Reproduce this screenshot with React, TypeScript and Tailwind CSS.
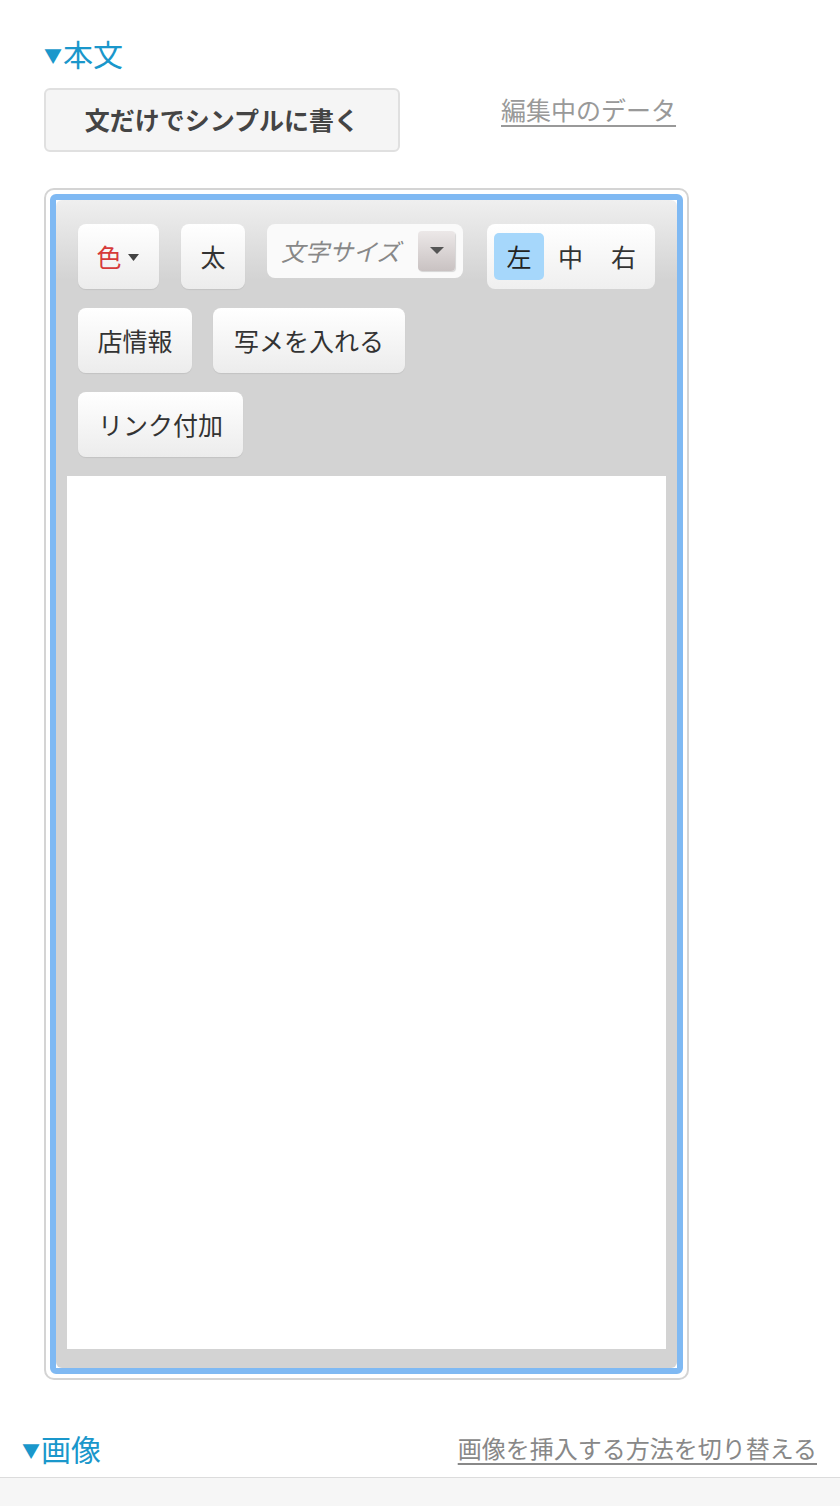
const font = { fontFamily: '"Noto Sans CJK JP", "Noto Sans", sans-serif' };

const ToolButton = ({ children, className = '' }: { children: React.ReactNode; className?: string }) => (
  <button
    className={`h-[65px] rounded-[8px] bg-[linear-gradient(#ffffff,#ececec)] shadow-[0_1px_1px_rgba(0,0,0,0.08)] text-[25px] text-[#333] flex items-center justify-center ${className}`}
  >
    {children}
  </button>
);

export default function App() {
  return (
    <div className="w-[840px] h-[1506px] bg-white flex flex-col" style={font}>
      {/* 本文 */}
      <section className="pl-[44px] pt-[33px]">
        <h2 className="text-[30px] leading-[36px] text-[#1a97cb] font-normal flex items-center">
          <span className="text-[18px] mr-[1px] mt-[4px]">▼</span>本文
        </h2>

        <div className="flex items-start mt-[15px]">
          <button className="w-[356px] h-[64px] rounded-[6px] border-2 border-[#e0e0e0] bg-[#f5f5f5] text-[25px] font-semibold text-[#444]">
            文だけでシンプルに書く
          </button>
          <a href="#" className="ml-[101px] mt-[3px] text-[25px] leading-[36px] text-[#999] underline underline-offset-[5px]">
            編集中のデータ
          </a>
        </div>

        {/* editor */}
        <div className="mt-[36px] w-[645px] h-[1192px] border-2 border-[#d4d4d4] rounded-[10px] p-[4px]">
          <div className="h-full border-[6px] border-[#7fb9f3] rounded-[6px]">
            <div className="h-full rounded-[6px] bg-[linear-gradient(#efefef,#d3d3d3_80px)] px-[11px] pt-[24px] pb-[19px] flex flex-col">
              <div className="px-[11px] flex flex-col gap-[19px]">
                <div className="flex items-start">
                  <ToolButton className="w-[81px] gap-[6px] pr-[2px]">
                    <span className="text-[#d63a3a]">色</span>
                    <svg width="11" height="7" viewBox="0 0 11 7" className="mt-[1px]">
                      <path d="M0 0h11L5.5 7z" fill="#444" />
                    </svg>
                  </ToolButton>
                  <ToolButton className="w-[64px] ml-[22px]">太</ToolButton>
                  <div className="ml-[22px] w-[196px] h-[54px] rounded-[8px] bg-[#fafafa] flex items-center pl-[14px] pr-[8px]">
                    <span className="italic text-[24px] text-[#888] flex-1">文字サイズ</span>
                    <div className="w-[37px] h-[40px] rounded-[4px] bg-[linear-gradient(#ece8e8,#c9c2c2)] shadow-[1px_1px_1px_rgba(0,0,0,0.15)] flex items-center justify-center">
                      <svg width="14" height="8" viewBox="0 0 14 8">
                        <path d="M0 0h14L7 7z" fill="#555" />
                      </svg>
                    </div>
                  </div>
                  <div className="ml-[24px] w-[168px] h-[65px] rounded-[8px] bg-[linear-gradient(#ffffff,#efefef)] flex items-center px-[7px] text-[25px] text-[#333]">
                    <span className="w-[50px] h-[47px] rounded-[5px] bg-[#a6d7fb] flex items-center justify-center text-[#222]">左</span>
                    <span className="ml-[14px]">中</span>
                    <span className="ml-[28px]">右</span>
                  </div>
                </div>
                <div className="flex">
                  <ToolButton className="w-[114px]">店情報</ToolButton>
                  <ToolButton className="w-[192px] ml-[21px]">写メを入れる</ToolButton>
                </div>
                <div className="flex">
                  <ToolButton className="w-[165px]">リンク付加</ToolButton>
                </div>
              </div>
              <div className="mt-[19px] flex-1 bg-white" />
            </div>
          </div>
        </div>
      </section>

      {/* 画像 */}
      <section className="mt-[48px] pl-[22px] pr-[23px] flex items-center justify-between h-[40px]">
        <h2 className="text-[30px] leading-[36px] text-[#1a97cb] font-normal flex items-center">
          <span className="text-[18px] mr-[1px] mt-[4px]">▼</span>画像
        </h2>
        <a href="#" className="text-[24px] leading-[32px] text-[#888] underline underline-offset-[5px]">
          画像を挿入する方法を切り替える
        </a>
      </section>

      <div className="mt-[9px] flex-1 border-t border-[#dcdcdc] bg-[#f6f6f6]" />
    </div>
  );
}
